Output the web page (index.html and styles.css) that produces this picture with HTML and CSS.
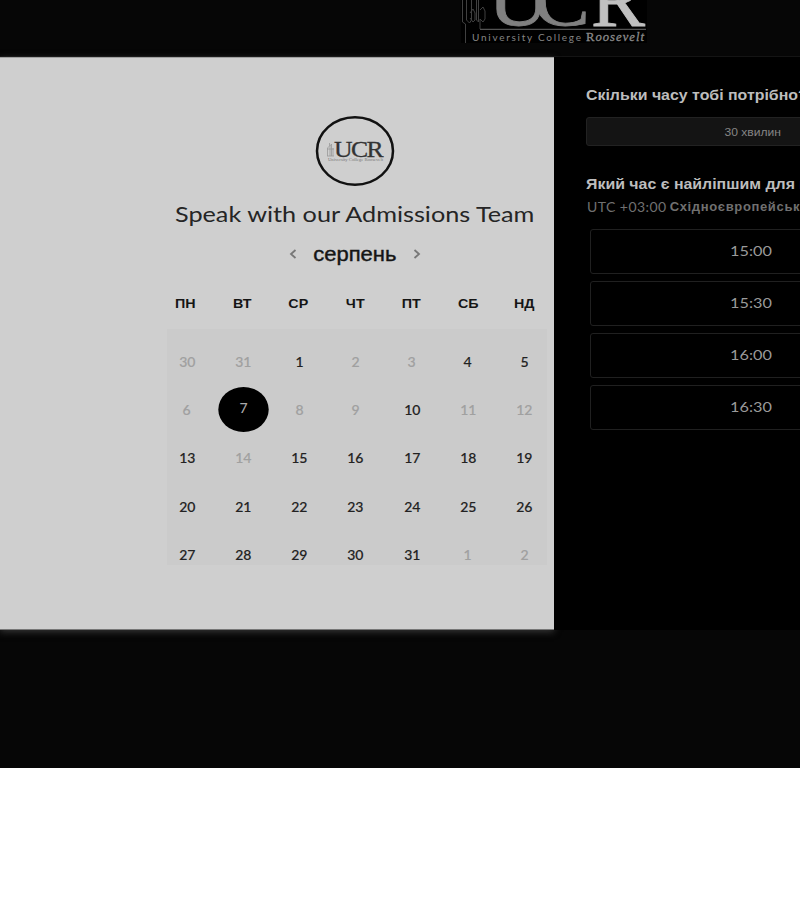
FILE: index.html
```html
<!DOCTYPE html>
<html lang="uk">
<head>
<meta charset="utf-8">
<title>Speak with our Admissions Team</title>
<link rel="stylesheet" href="styles.css">
</head>
<body>
<div class="page">
  <header class="top">
    <svg class="brand" width="186" height="45" viewBox="461 0 186 45">
      <rect x="461" y="0" width="186" height="43" fill="#000"/>
      <g fill="none" stroke="#404040" stroke-width="1">
        <path d="M462.500 0V22l3 2V43M466.500 0V20l3 3 2-3V0M470 13l3-4 2 4v7l-2 2-3-4M476.500 0V20l2 2V0M480 10l3-3 2 4v8l-2 3-3-3V29"/>
        <path d="M480 29.300H646" stroke="#686868"/>
      </g>
      <g class="brand-letters">
        <text x="488" y="25" textLength="61" lengthAdjust="spacingAndGlyphs" fill="#808080" stroke="#808080">U</text>
        <text x="533" y="25" textLength="57" lengthAdjust="spacingAndGlyphs" fill="#808080" stroke="#808080">C</text>
        <text x="591" y="25.500" textLength="54" lengthAdjust="spacingAndGlyphs" fill="#c0c0c0" stroke="#c0c0c0">R</text>
      </g>
      <text class="brand-sub" x="472" y="41" textLength="109" lengthAdjust="spacing">University College</text>
      <text class="brand-name" x="586" y="41" textLength="59" lengthAdjust="spacingAndGlyphs">R<tspan font-style="italic">oosevelt</tspan></text>
    </svg>
  </header>
  <main class="booking">
    <section class="calendar">
      <svg class="avatar" width="80" height="72" viewBox="315 115 80 72">
        <ellipse cx="355" cy="150" rx="38" ry="33.700" fill="none" stroke="#111" stroke-width="2.500"/>
        <path d="M327.500 155v-8l2-2v-3M330 155v-10l1.500-2v12M333 155v-8M327 148h7M327 155h7" fill="none" stroke="#999" stroke-width=".8"/>
        <text class="avatar-letters" x="334" y="155.500" textLength="48" lengthAdjust="spacingAndGlyphs">UCR</text>
        <text class="avatar-sub" x="328" y="160" textLength="55" lengthAdjust="spacingAndGlyphs">University College Roosevelt</text>
      </svg>
      <h1 class="title"><span class="wide">Speak with our Admissions Team</span></h1>
      <div class="month">
        <svg width="8" height="10" viewBox="0 0 8 10"><path d="M6.500 1 2 5l4.500 4"/></svg>
        <h2 class="month-name"><span class="wide">серпень</span></h2>
        <svg width="8" height="10" viewBox="0 0 8 10"><path d="m1.500 1 4.500 4-4.500 4"/></svg>
      </div>
      <div class="weekdays"><b>ПН</b><b>ВТ</b><b>СР</b><b>ЧТ</b><b>ПТ</b><b>СБ</b><b>НД</b></div>
      <div class="days">
        <div class="grid">
          <span class="off">30</span><span class="off">31</span><span>1</span><span class="off">2</span><span class="off">3</span><span>4</span><span>5</span>
          <span class="off">6</span><span class="picked">7</span><span class="off">8</span><span class="off">9</span><span>10</span><span class="off">11</span><span class="off">12</span>
          <span>13</span><span class="off">14</span><span>15</span><span>16</span><span>17</span><span>18</span><span>19</span>
          <span>20</span><span>21</span><span>22</span><span>23</span><span>24</span><span>25</span><span>26</span>
          <span>27</span><span>28</span><span>29</span><span>30</span><span>31</span><span class="off">1</span><span class="off">2</span>
        </div>
      </div>
    </section>
    <section class="options">
      <h3 class="question"><span class="wide">Скільки часу тобі потрібно?</span></h3>
      <div class="duration"><span class="wide">30 хвилин</span></div>
      <h3 class="question second"><span class="wide">Який час є найліпшим для вас?</span></h3>
      <p class="zone"><span class="utc">UTC +03:00</span><b>Східноєвропейський час</b></p>
      <div class="slots">
        <div class="slot"><span>15:00</span></div>
        <div class="slot"><span>15:30</span></div>
        <div class="slot"><span>16:00</span></div>
        <div class="slot"><span>16:30</span></div>
      </div>
    </section>
  </main>
  <footer class="bottom"></footer>
</div>
</body>
</html>
```
FILE: styles.css
```css
* { box-sizing: border-box; }
body { margin: 0; background: #fff; overflow: hidden; font-family: "Liberation Sans", sans-serif; }
h1, h2, h3, p { margin: 0; }
.page { width: 800px; height: 768px; overflow: hidden; background: #060606; }
.top { height: 57px; padding-left: 461px; border-bottom: 1px solid #141414; }
.brand { display: block; }
.brand-letters { font: 77px "Liberation Serif", serif; stroke-width: .8px; }
.brand-sub { font: 10px Lato, sans-serif; fill: #858585; }
.brand-name { font: 12.5px "Liberation Serif", serif; fill: #8a8a8a; stroke: #8a8a8a; stroke-width: .3px; letter-spacing: 1px; }
.booking { display: flex; height: 573px; }
.calendar {
  width: 554px; flex: none; padding: 58px 0 0 156px;
  display: flex; flex-direction: column; align-items: center;
  background: #cfcfcf; border-bottom: 1px solid #777; border-top: 1px solid #a0a0a0;
  box-shadow: 0 2px 7px #363636;
}
.avatar { display: block; flex: none; }
.avatar-letters { font: 24px "Liberation Serif", serif; fill: #333; stroke: #333; stroke-width: .3px; letter-spacing: -1.5px; }
.avatar-sub { font: 4px "Liberation Serif", serif; fill: #777; }
.wide { display: inline-block; white-space: nowrap; }
.title { height: 52px; font: 400 22px/51px Lato, sans-serif; color: #252525; }
.title .wide { transform: scaleX(1.147); }
.month { display: flex; align-items: center; justify-content: center; height: 28px; gap: 16px; }
.month svg { fill: none; stroke: #777; stroke-width: 1.8; }
.month-name { width: 84px; text-align: center; font: 400 20px/28px "Liberation Sans", sans-serif; color: #151515; -webkit-text-stroke: .4px #151515; }
.month-name .wide { transform: scaleX(1.1); }
.weekdays { display: grid; grid-template-columns: repeat(7, 56.5px); height: 61px; line-height: 72px; text-align: center; font-size: 13px; color: #151515; }
.weekdays b { transform: scaleX(1.1); }
.days { width: 380px; height: 236px; margin-left: 4px; background: #cbcbcb; }
.grid { display: grid; width: 393px; margin-left: -8px; padding-top: 8px; grid-template-columns: repeat(7, 56.2px); grid-auto-rows: 48.4px; align-items: center; justify-items: center; font: 500 12.5px/20px Lato, sans-serif; color: #222; }
.grid span { padding-top: 3px; transform: scaleX(1.12); -webkit-text-stroke: .15px; }
.grid .off { color: #a0a0a0; }
.grid .picked { width: 45px; height: 45px; padding-top: 0; line-height: 44px; text-align: center; border-radius: 50%; background: #000; color: #aaa; -webkit-text-stroke: 0; }
.options { flex: none; width: 400px; padding: 28px 30px 0 32px; background: #000; }
.options .wide { transform-origin: left; }
.question { height: 20px; font-size: 15px; line-height: 20px; color: #bdbdbd; }
.question .wide { transform: scaleX(1.06); }
.duration { display: flex; align-items: center; justify-content: center; height: 29px; margin-top: 12px; width: 334px; border: 1px solid #222; border-radius: 3px; background: #141414; color: #858585; font-size: 11px; }
.duration .wide { transform: scaleX(1.1); transform-origin: center; }
.question.second { margin-top: 27px; line-height: 21px; }
.zone { display: flex; gap: 3px; width: 400px; height: 24px; padding-left: 1px; white-space: nowrap; line-height: 27px; font-size: 13px; color: #707070; }
.zone b { letter-spacing: .65px; }
.utc { font: 14px/27px Lato, sans-serif; letter-spacing: .45px; }
.slots { display: grid; gap: 7px; margin: 12px 0 0 4px; width: 322px; }
.slot { display: flex; align-items: center; justify-content: center; height: 45px; border: 1px solid #202020; border-radius: 3px; font: 14px/42px Lato, sans-serif; color: #9a9a9a; }
.slot span { margin-top: -1px; transform: scaleX(1.16); }
```
